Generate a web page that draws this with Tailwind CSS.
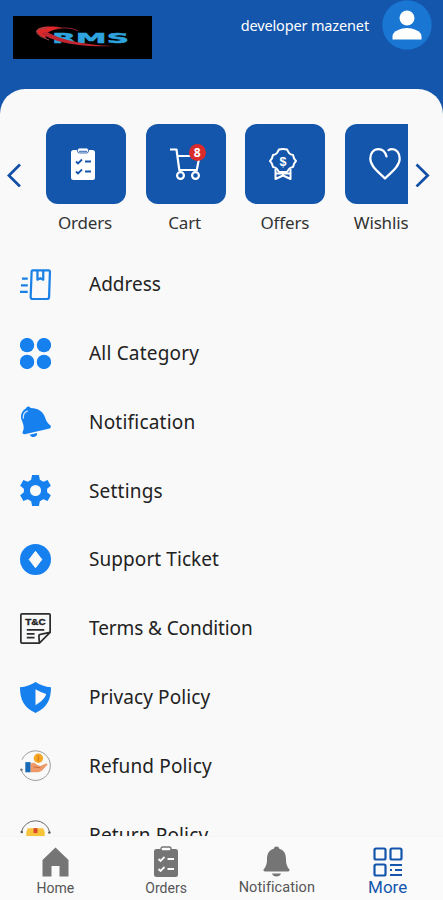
<!DOCTYPE html>
<html lang="en">
  <head>
    <meta charset="UTF-8" />
    <meta name="viewport" content="width=device-width, initial-scale=1.0" />
    <title>RMS - More</title>
    <script src="https://cdn.jsdelivr.net/npm/@tailwindcss/browser@4"></script>
  </head>
  <body class="bg-[#1456ac] font-['Noto_Sans',sans-serif] text-[#222]">
    <div class="flex h-[900px] w-[443px] flex-col overflow-hidden">
      <header class="flex h-[89px] shrink-0 items-start justify-between bg-[#1456ac] pr-[11px] pl-[13px]">
        <!-- Logo -->
        <svg class="mt-4 h-[43px] w-[139px]" viewBox="0 0 139 43">
          <rect width="139" height="43" fill="#000" />
          <path d="M50 12C36 9 22 11 24 16c1 3 5 5 10 7-3-3-3-8 16-11z" fill="#e0282a" />
          <path d="M34 12c-8 0-12 2-10 5 1 3 7 5 12 7" fill="none" stroke="#8f4a52" stroke-width="1" />
          <text x="39" y="26.500" textLength="77" lengthAdjust="spacingAndGlyphs" font-family="DejaVu Sans" font-weight="bold" font-size="13.500" fill="#2ea3dd" stroke="#2ea3dd" stroke-width=".5">RMS</text>
          <path d="M28 17c6 6 32 15 72 13-28-1-52-6-66-14z" fill="#c02530" />
          <path d="M43 13c8-2 17-1 22 2" fill="none" stroke="#8c2230" stroke-width="1" />
        </svg>
        <div class="flex items-start">
          <span class="mt-[15px] mr-[13px] text-[14.500px]/5 tracking-[-0.01em] text-white">developer mazenet</span>
          <svg class="size-[50px]" viewBox="0 0 50 50">
            <circle cx="25" cy="25" r="24.700" fill="#1976d2" />
            <circle cx="25" cy="18" r="7.500" fill="#fff" />
            <path d="M10.500 39.500v-3.500c0-5 9-8 14.500-8s14.500 3 14.500 8v3.500z" fill="#fff" />
          </svg>
        </div>
      </header>

      <main class="flex min-h-0 flex-1 flex-col overflow-hidden rounded-t-[25px] bg-[#f9f9f9]">
        <!-- Shortcuts -->
        <section class="flex shrink-0 items-start pt-[35px]">
          <svg class="mt-[39px] mr-[24px] ml-[7px] h-6 w-[15px] shrink-0" viewBox="0 0 15 24" fill="none" stroke="#124fa5" stroke-width="2.700">
            <path d="M13 1.500 1.900 12.500 13 23.500" />
          </svg>
          <div class="flex w-[362px] shrink-0 gap-[19.700px] overflow-hidden text-center text-[17px]/6 tracking-[-0.01em] text-[#333]">
            <div class="w-20 shrink-0">
              <div class="flex size-20 items-center justify-center rounded-xl bg-[#1456ac]">
                <svg class="mr-[7px] h-8 w-6" viewBox="0 0 24 32">
                  <rect y="2" width="24" height="30" rx="2.500" fill="#fff" />
                  <rect x="6.500" y="0" width="11" height="5" rx="2" fill="#fff" stroke="#1456ac" stroke-width=".8" />
                  <path d="M8 3.500h8" stroke="#5583c1" stroke-width="1.500" />
                  <path d="m5 13.500 2 2 4-4M5 23.500l2 2 4-4M14 13.500h6M14 23.500h6" fill="none" stroke="#1456ac" stroke-width="1.800" />
                </svg>
              </div>
              <div class="mt-[7px] pr-[2px]">Orders</div>
            </div>
            <div class="w-20 shrink-0">
              <div class="relative flex size-20 items-center justify-center rounded-xl bg-[#1456ac]">
                <svg class="h-8 w-[31px]" viewBox="0 0 31 32" fill="none" stroke="#fff" stroke-width="2.200">
                  <path d="M0 1.500h6.500l2.800 20.500h17.500l2.700-14H7.300" stroke-linejoin="round" />
                  <circle cx="10.500" cy="27.500" r="3.400" />
                  <circle cx="25.500" cy="27.500" r="3.400" />
                </svg>
                <span class="absolute top-[20px] left-[43px] flex size-[17px] items-center justify-center rounded-full bg-[#d92b2b] text-[12px] leading-none font-bold text-white">8</span>
              </div>
              <div class="mt-[7px] pr-[2px]">Cart</div>
            </div>
            <div class="w-20 shrink-0">
              <div class="flex size-20 items-center justify-center rounded-xl bg-[#1456ac]">
                <svg class="mr-[4px] h-8 w-7" viewBox="0 0 28 32" fill="none" stroke="#fff" stroke-width="2" stroke-linejoin="round">
                  <path d="M10 1.500q4-1 8 0l2 3.500q1 1.500 4 2 .5 3.500 3 6-2.500 2.500-3 6-3 .5-4 2l-2 3h-8l-2-3q-1-1.500-4-2-.5-3.500-3-6 2.500-2.500 3-6 3-.5 4-2z" />
                  <path d="M6.500 21v10l7.500-3.500 7.500 3.500V21M7 25.500h14" />
                  <text x="14" y="17.500" text-anchor="middle" font-family="Liberation Sans" font-weight="bold" font-size="12.500" fill="#fff" stroke="none">$</text>
                </svg>
              </div>
              <div class="mt-[7px] pr-px">Offers</div>
            </div>
            <div class="w-20 shrink-0">
              <div class="flex size-20 items-center justify-center rounded-xl bg-[#1456ac]">
                <svg class="h-8 w-8" viewBox="0 0 32 32" fill="none" stroke="#fff" stroke-width="2.200" stroke-linecap="round" stroke-linejoin="round">
                  <path d="M17.500 8.500C16 3 13 1.200 9.500 1.200 4.500 1.200 1.300 5 1.300 10.500c0 8 8.700 14 14.700 20 6-6 14.700-12 14.700-20 0-5.500-3.200-9.300-7.700-9.300q-2 0-3.500 1" />
                </svg>
              </div>
              <div class="mt-[7px] pr-[2px]">Wishlist</div>
            </div>
          </div>
          <svg class="mt-[39px] ml-[7px] h-6 w-[15px] shrink-0" viewBox="0 0 15 24" fill="none" stroke="#124fa5" stroke-width="2.700">
            <path d="m1.500 1.500 11.200 11-11.200 11" />
          </svg>
        </section>

        <!-- Menu -->
        <ul class="mt-[15px] min-h-0 flex-1 overflow-hidden pl-5 text-[19px]">
          <li class="flex h-[68.800px] items-center gap-[38px]">
            <svg class="size-[31px]" viewBox="0 0 32 32" fill="none" stroke="#1a80e5" stroke-width="2.300" stroke-linejoin="round">
              <path d="M13 1.500h16.500q1.500 0 1.400 1.500L30 29q0 2-2 2H13q-2 0-2-2l1-26.500q0-1 1-1z" />
              <path d="M18 2v9l3-1.500 3 1.500V2M2 10h6M1 17h7M0 23.500h8" />
            </svg>
            <span>Address</span>
          </li>
          <li class="flex h-[68.800px] items-center gap-[38px]">
            <svg class="size-[31px]" viewBox="0 0 32 32" fill="#1580ee">
              <circle cx="7.300" cy="7.300" r="7.400" />
              <circle cx="24.700" cy="7.300" r="7.400" />
              <circle cx="7.300" cy="24.700" r="7.400" />
              <circle cx="24.700" cy="24.700" r="7.400" />
            </svg>
            <span class="tracking-[0.010em]">All Category</span>
          </li>
          <li class="flex h-[68.800px] items-center gap-[38px]">
            <svg class="size-[31px]" viewBox="0 0 32 32" fill="#1580ee">
              <path d="M6 2.500Q8-1 11 2c8 0 13 4 15 10 1 4 3 6 5.500 8 1 2 0 3-2 3.500L6 29c-3 1-4-1-3-3 2-4 0-8-1.500-12C0 9 2 5 6 2.500z" />
              <path d="M10 29.800l7.500-2q.5 3.700-3 4.200-3 .5-4.500-2.200z" />
              <path d="M3.500 13C3 9 5 6 8 5" fill="none" stroke="#d7eaff" stroke-width="1.200" />
            </svg>
            <span class="tracking-[0.011em]">Notification</span>
          </li>
          <li class="flex h-[68.800px] items-center gap-[38px]">
            <svg class="size-[31px]" viewBox="0 0 32 32">
              <path d="M12.500 0h7l1 5 3.500 2 4.500-1.800 3.300 6L28 14.300v3.400l3.800 3.100-3.300 6L24 25l-3.500 2-1 5h-7l-1-5L8 25l-4.500 1.800-3.300-6L4 17.700v-3.400L.2 11.200l3.300-6L8 7l3.500-2z" fill="#1580ee" />
              <circle cx="16" cy="16" r="5.700" fill="#f9f9f9" />
            </svg>
            <span class="tracking-[0.010em]">Settings</span>
          </li>
          <li class="flex h-[68.800px] items-center gap-[38px]">
            <svg class="size-[31px]" viewBox="0 0 32 32">
              <circle cx="16" cy="16" r="16" fill="#1580ee" />
              <path d="m16 7.500 6.500 8.500-6.500 8.500-6.500-8.500z" fill="#f9f9f9" stroke="#f9f9f9" stroke-linejoin="round" />
            </svg>
            <span class="tracking-[0.004em]">Support Ticket</span>
          </li>
          <li class="flex h-[68.800px] items-center gap-[38px]">
            <svg class="size-[31px]" viewBox="0 0 32 32" fill="none" stroke="#2d2d2d" stroke-width="1.800" stroke-linejoin="round">
              <path d="M2 .9h28q1.100 0 1.100 1.100v18L20 31.100H2Q.9 31.100.9 30V2Q.9.900 2 .9zM31 20l-10 2q-1.500 0-1.500 2L20 31M7 17.500h18M7 21.500h8M7 25.500h8" />
              <text x="16" y="12.800" text-anchor="middle" textLength="21" lengthAdjust="spacingAndGlyphs" font-family="Liberation Sans" font-weight="bold" font-size="10" fill="#222" stroke="#222" stroke-width=".4">T&amp;C</text>
            </svg>
            <span class="tracking-[-0.005em]">Terms &amp; Condition</span>
          </li>
          <li class="flex h-[68.800px] items-center gap-[38px]">
            <svg class="size-[31px]" viewBox="0 0 32 32">
              <path d="M16 0q7 4.500 16 5.500c0 13-4 21-16 26.500C4 26.500 0 18.500 0 5.500Q9 4.500 16 0z" fill="#1580ee" />
              <path d="M16 7.500q5 3 11 5c-1 4-5 8-11 11.500z" fill="#f9f9f9" />
            </svg>
            <span class="tracking-[0.005em]">Privacy Policy</span>
          </li>
          <li class="flex h-[68.800px] items-center gap-[38px]">
            <svg class="size-[31px]" viewBox="0 0 32 32">
              <path d="M2 10A15.300 15.300 0 1 1 1.500 21" fill="none" stroke="#999" stroke-width="1" />
              <circle cx="1.500" cy="20.500" r="1.300" fill="#777" />
              <circle cx="19" cy="8.500" r="4.800" fill="#f5a623" />
              <path d="M19 5.500v6" stroke="#d97f16" stroke-width="1.300" />
              <path d="M5.500 12.500H11V23H5.500z" fill="#1769b5" />
              <path d="M11 14q4-2 6 1l4 1.500 6-2.500q2 0 1 1.500L23 21q-2 2-5 2h-7z" fill="#ee9a68" />
              <path d="M14 17.500l7 .8" stroke="#c96d42" />
            </svg>
            <span class="tracking-[0.008em]">Refund Policy</span>
          </li>
          <li class="flex h-[68.800px] items-center gap-[38px]">
            <svg class="size-[31px]" viewBox="0 0 32 32">
              <path d="M1.500 13a15 15 0 0 1 29 0" fill="none" stroke="#666" stroke-width="1" />
              <circle cx="1.800" cy="13.500" r="1.300" fill="#555" />
              <circle cx="30.300" cy="14" r="1.300" fill="#555" />
              <path d="M8 9.500h16l1.500 4V24h-19V13.500z" fill="#f6c33b" />
              <path d="M14 9.500h4v5h-4z" fill="#d9442d" />
            </svg>
            <span class="tracking-[0.008em]">Return Policy</span>
          </li>
        </ul>
      </main>

      <!-- Bottom navigation -->
      <nav class="grid h-[64px] shrink-0 grid-cols-4 border-t border-[#f6f6f6] bg-[#fafafa] font-[Roboto,sans-serif] text-[13.500px]/4 text-[#555]">
        <a href="#" class="flex flex-col items-center pt-[10px]">
          <svg class="h-[30px] w-[27px]" viewBox="0 0 27 30" fill="#757575">
            <path d="M13.500.5 26.500 13v16.500h-9V19h-8v10.500h-9V13z" />
          </svg>
          <span class="mt-[3px] text-[14px]">Home</span>
        </a>
        <a href="#" class="flex flex-col items-center pt-[9px]">
          <svg class="h-[31px] w-[24px]" viewBox="0 0 24 31">
            <rect y="3" width="24" height="28" rx="2.500" fill="#757575" />
            <rect x="7" y="1" width="10" height="4" rx="1.500" fill="#fafafa" stroke="#757575" stroke-width="1.400" />
            <path d="m4.500 13 2 2 4-4M4.500 23l2 2 4-4M13.500 13H20M13.500 23H20" fill="none" stroke="#fafafa" stroke-width="1.800" />
          </svg>
          <span class="mt-[3px] text-[14px]">Orders</span>
        </a>
        <a href="#" class="flex flex-col items-center pt-[9px]">
          <svg class="h-[31px] w-[27px]" viewBox="0 0 27 31" fill="#757575">
            <path d="M13.500.5q2.500 0 2.800 2.300C22 4.500 23 9 23 14q0 6 3.500 9.500.5 2-1.500 2H2q-2 0-1.500-2Q4 20 4 14C4 9 5 4.500 10.700 2.800Q11 .5 13.500.5zM9 27.500h9q-1 3-4.500 3T9 27.500z" />
          </svg>
          <span class="mt-[3px] text-[14.500px] tracking-[0.005em]">Notification</span>
        </a>
        <a href="#" class="flex flex-col items-center pt-[10px] text-[17px]/4 text-[#1456ac]">
          <svg class="h-[30px] w-[30px]" viewBox="0 0 30 30" fill="none" stroke="#1456ac" stroke-width="2.200">
            <rect x="1.500" y="1.500" width="11" height="11" rx="1.500" />
            <rect x="17.500" y="1.500" width="11" height="11" rx="1.500" />
            <rect x="1.500" y="17.500" width="11" height="11" rx="1.500" />
            <path d="M17 18h12M22 23h7M17 28h12M17 23h2" stroke-width="1.900" />
          </svg>
          <span class="mt-[2px]">More</span>
        </a>
      </nav>
    </div>
  </body>
</html>
